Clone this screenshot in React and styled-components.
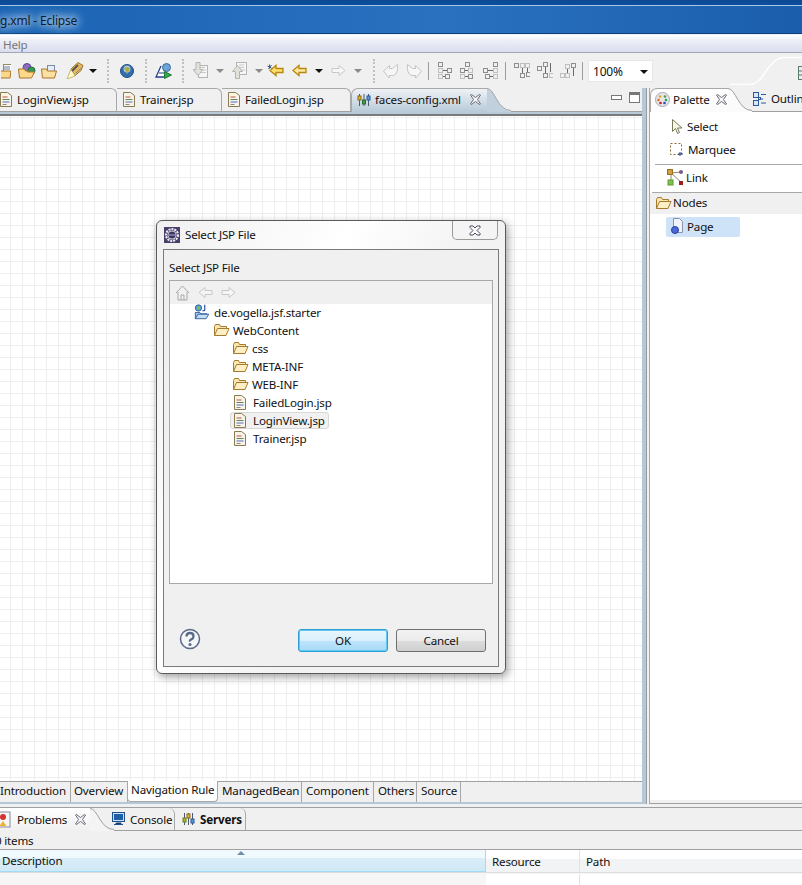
import React from "react";
import styled, { createGlobalStyle } from "styled-components";

const Global = createGlobalStyle`
  html, body { margin: 0; padding: 0; background: #f0f0f0; }
  body { font-family: "Noto Sans", "Open Sans", "Liberation Sans", sans-serif; font-size: 11.6px; letter-spacing: -0.18px; color: #111; }
  * { box-sizing: border-box; }
`;

const Win = styled.div`position: relative; width: 802px; height: 885px; overflow: hidden; display: flex; flex-direction: column; background: #f0f0f0;`;
const TitleBar = styled.div`
  flex: 0 0 35px; display: flex; align-items: center; padding: 7px 0 0 0;
  border-bottom: 1px solid #e8eefc;
  background:
    linear-gradient(180deg, #0c4a94 0, #0c4f9e 5px, #a9c6e6 5px, #a9c6e6 6px, transparent 6px, transparent 33px, #0f3f7c 33px),
    linear-gradient(90deg, #1b62b4 0, #2a72c0 55%, #1a5eac 100%);
`;
const TitleText = styled.span`
  font-size: 12px; color: #0d1a2a;
  text-shadow: 0 0 6px #cfe0f2, 0 0 10px #bcd4ee, 0 0 14px #a8c8ea, 0 0 16px #a8c8ea;
`;
const MenuBar = styled.div`
  flex: 0 0 18px; padding: 2px 0 0 3px; display: flex; align-items: center; color: #777;
  background: linear-gradient(180deg, #fff 0, #eceef6 35%, #d9ddee 100%); border-bottom: 1px solid #a4a8b4;
`;
const ToolBar = styled.div`flex: 0 0 35px; display: flex; align-items: center; position: relative; background: #f0f0f0;`;
const Slot = styled.div`flex: 0 0 ${p => p.$w}px; display: flex; justify-content: center; align-items: center; height: 24px;`;
const DotSep = styled.div`height: 24px; width: 2px; border-left: 2px dotted #c0c0c0;`;
const LineSep = styled.div`height: 18px; width: 1px; background: #9c9c9c;`;
const Arrow = styled.div`
  width: 0; height: 0; border-left: 4px solid transparent; border-right: 4px solid transparent;
  border-top: 4px solid ${p => p.$on ? "#111" : "#8a8a8a"};
`;
const Combo = styled.div`
  flex: 0 0 65px; height: 22px; background: #fff; border: 1px solid #e6e6e6; margin-left: 5px;
  display: flex; align-items: center; justify-content: space-between; padding: 2px 4px 0 4px; font-size: 12px;
`;
const PerspCurve = styled.svg`position: absolute; left: 730px; top: 2px; display: block;`;
const Work = styled.div`flex: 0 0 716px; display: flex; background: #f0f0f0;`;
const EditorFolder = styled.div`flex: 0 0 646px; display: flex; flex-direction: column; border-right: 4px solid #b4c8d8; box-shadow: 1px 0 0 #9a9a9a;`;
const TabStrip = styled.div`
  flex: 0 0 24px; display: flex; position: relative; align-items: stretch;
  border-bottom: 1px solid #a0a0a0;
`;
const Tab = styled.div`
  flex: 0 0 ${p => p.$w}px; display: flex; align-items: center; gap: 5px; padding: 0 0 ${p => p.$pb ?? 2}px ${p => p.$pl ?? 6}px;
  border-top: ${p => p.$noTop ? 0 : "1px solid #a8a8a8"}; border-right: 1px solid #a8a8a8; white-space: nowrap;
  border-top-right-radius: 6px; ${p => p.$bold && "font-weight: 700;"}
  margin-left: ${p => p.$ml || 0}px; color: #111;
`;
const ActiveTab = styled.div`
  flex: 0 0 ${p => p.$w}px; display: flex; align-items: center; gap: ${p => p.$gap ?? 5}px; padding: 0 0 2px ${p => p.$pl ?? 5}px;
  border-top: 1px solid #a8a8a8; border-left: 1px solid #a8a8a8; border-top-left-radius: 7px; margin-bottom: -1px;
  background: linear-gradient(180deg, ${p => p.$c1} 0, ${p => p.$c2} 100%); white-space: nowrap; position: relative;
`;
const Curve = styled.svg`flex: 0 0 ${p => p.width}px; margin-bottom: -1px; display: block; position: relative;`;
const CloseMark = styled.span`display: flex; margin-left: ${p => p.$m ?? 3}px;`;
const ViewControls = styled.div`margin-left: auto; display: flex; gap: 7px; align-items: center; padding: 0 2px 4px 0;`;
const MinBtn = styled.div`width: 11px; height: 5px; border: 1px solid #777; background: #fff;`;
const MaxBtn = styled.div`width: 11px; height: 11px; border: 1px solid #777; border-top-width: 3px; background: #fff;`;
const Band = styled.div`flex: 0 0 4px; background: #b8cad8; border-bottom: 2px solid #7a7a7a;`;
const Canvas = styled.div`
  flex: 1; background-color: #fff; min-height: 0; border-bottom: 1px solid #a0a0a0;
  background-image: linear-gradient(#eeeeee 1px, transparent 1px), linear-gradient(90deg, #eeeeee 1px, transparent 1px);
  background-size: 12px 12px; background-position: 10px 1px;
`;
const PageTabs = styled.div`flex: 0 0 22px; display: flex; background: #f0f0f0; border-bottom: 2px solid #b4c8d8; align-items: stretch;`;
const PageTab = styled.div`
  flex: 0 0 ${p => p.$w}px; display: flex; align-items: center; white-space: nowrap; padding: 0 0 3px ${p => p.$pl}px;
  border-right: 1px solid #a8a8a8; height: 20px;
  ${p => p.$on && "background: #fff; border-bottom: 1px solid #a8a8a8; border-bottom-right-radius: 4px; border-bottom-left-radius: 4px; border-left: 1px solid #a8a8a8; margin-top: -1px; height: 21px; margin-left: -1px; flex-basis: 91px;"}
`;
const Palette = styled.div`
  flex: 1; margin-left: 3px; display: flex; flex-direction: column; border-left: 1px solid #a8a8a8; border-bottom: 1px solid #a0a0a0;
`;
const PalBody = styled.div`flex: 1; background: #fff; display: flex; flex-direction: column; border-bottom: 3px solid #f0f0f0; padding-top: 3px;`;
const Tool = styled.div`
  height: ${p => p.$h || 23}px; display: flex; align-items: center; gap: ${p => p.$gap ?? 4}px; padding: 0 0 2px ${p => p.$pl || 22}px; white-space: nowrap;
`;
const Rule = styled.div`height: 1px; background: #a8a8a8; margin: ${p => p.$mt || 0}px 0 0 ${p => p.$ml || 0}px;`;
const Drawer = styled.div`height: 21px; background: #f0f0f0; display: flex; align-items: center; gap: 1px; padding: 0 0 2px 5px;`;
const Entry = styled.div`
  width: 74px; height: 20px; margin: 3px 0 0 16px; background: #cfe3f8; border-radius: 2px; display: flex; align-items: center; gap: 3px; padding: 0 0 2px 5px;
`;
const Bottom = styled.div`flex: 1; display: flex; flex-direction: column; border-top: 1px solid #a0a0a0; margin-top: 3px;`;
const BotTabs = styled.div`flex: 0 0 23px; display: flex; border-bottom: 1px solid #a0a0a0; align-items: stretch;`;
const BotActive = styled.div`
  flex: 0 0 90px; display: flex; align-items: center; gap: 6px; white-space: nowrap; margin-bottom: -1px;
  background: linear-gradient(180deg, #fff 0, #f0f0f0 100%);
`;
const Status = styled.div`flex: 0 0 19px; display: flex; align-items: center; border-bottom: 1px solid #a0a0a0;`;
const StatusText = styled.span`margin-left: -5px; white-space: pre;`;
const HeadRow = styled.div`flex: 0 0 23px; display: flex; background: linear-gradient(180deg, #fff 0, #fff 40%, #f1f3f5 40%, #f1f3f5 100%); border-bottom: 1px solid #dcdcdc;`;
const Col = styled.div`
  flex: 0 0 ${p => p.$w}px; display: flex; align-items: center; padding: 0 0 0 ${p => p.$pl || 6}px; position: relative; border-right: 1px solid ${p => p.$on ? "#9fdcf5" : "#e2e2e2"};
  ${p => p.$on && "background: linear-gradient(180deg, #f0f9fd 0, #f0f9fd 40%, #d9edf8 40%, #d0e8f5 100%); border-bottom: 1px solid #9fdcf5;"}
  ${p => p.$grow && "flex: 1; border-right: 0;"}
`;
const SortMark = styled.div`
  position: absolute; top: 1px; left: 237px; width: 0; height: 0; border-left: 4px solid transparent; border-right: 4px solid transparent; border-bottom: 4px solid #6e8eaa;
`;
const Rows = styled.div`flex: 1; display: flex; background: #f6f6f6; padding-top: 1px;`;
const Cell = styled.div`flex: 0 0 ${p => p.$w}px; border-right: 1px solid #e2e2e2; background: #fff; ${p => p.$grow && "flex: 1; border-right: 0;"} ${p => p.$off && "background: #f6f6f6; border: 0;"}`;

/* dialog */
const Dialog = styled.div`
  position: absolute; left: 156px; top: 220px; width: 350px; height: 454px; border: 1px solid #5a5a5a; border-radius: 6px;
  background: linear-gradient(115deg, #f0f0f0 0, #fff 35%, #f2f2f2 60%, #f2f2f2 100%);
  box-shadow: 2px 3px 8px rgba(0,0,0,.38); padding: 0 6px 6px 6px; display: flex; flex-direction: column;
`;
const DlgTitle = styled.div`flex: 0 0 28px; display: flex; align-items: flex-start; padding-left: 1px;`;
const DlgHeading = styled.div`display: flex; align-items: center; gap: 5px; height: 27px;`;
const CloseBtn = styled.div`
  margin-left: auto; margin-right: 1px; width: 46px; height: 19px; border: 1px solid #9a9a9a; border-top: 0; border-radius: 0 0 5px 5px; background: #f4f4f4;
  display: flex; align-items: center; justify-content: center;
`;
const DlgInner = styled.div`flex: 1; border: 1px solid #7a7a7a; background: #f0f0f0; padding: 8px 5px 0 5px; display: flex; flex-direction: column;`;
const DlgLabel = styled.div`height: 22px; display: flex; align-items: center; padding-bottom: 4px;`;
const TreeBox = styled.div`flex: 0 0 304px; border: 1px solid #a8a8a8; background: #fff; display: flex; flex-direction: column;`;
const TreeTools = styled.div`flex: 0 0 23px; background: #f0f0f0; display: flex; align-items: center; gap: 8px; padding-left: 5px;`;
const TreeList = styled.div`display: flex; flex-direction: column; margin-top: -1px;`;
const Node = styled.div`height: 18px; display: flex; align-items: center; padding-left: ${p => p.$d}px;`;
const NodeBody = styled.span`
  display: inline-flex; align-items: center; height: 17px; gap: ${p => p.$gap}px; white-space: nowrap;
  border: 1px solid transparent; padding: 0 3px 0 3px; border-radius: 3px;
  ${p => p.$sel && "background: #f1f1f1; border-color: #d8d8d8;"}
`;
const DlgFoot = styled.div`flex: 1; display: flex; align-items: flex-end; padding: 0 7px 14px 10px; gap: 8px;`;
const HelpIcon = styled.svg`margin-right: auto; margin-bottom: 2px;`;
const Btn = styled.div`
  width: 90px; height: 23px; border-radius: 3px; display: flex; align-items: center; justify-content: center;
  border: 1px solid ${p => p.$def ? "#2c9ed8" : "#707070"};
  background: ${p => p.$def ? "linear-gradient(180deg,#eaf6fd 0,#d9f0fc 50%,#bee6fd 50%,#a7d9f5 100%)" : "linear-gradient(180deg,#f2f2f2 0,#ebebeb 50%,#dddddd 50%,#cfcfcf 100%)"};
  ${p => p.$def && "box-shadow: inset 0 0 0 1px #62c8f0;"}
`;

/* icons */
const Doc = () => (
  <svg width="12" height="15" viewBox="0 0 12 15" style={{ flex: "0 0 12px" }}>
    <path d="M.5.5h7l4 3v11h-11z" fill="#f8f4e8" stroke="#8a7a50" />
    <path d="M2.500 5h5" stroke="#c05050" /><path d="M2.500 7.500h7" stroke="#5a8a5a" /><path d="M2.500 10h7" stroke="#5a6ac0" /><path d="M2.500 12.500h4" stroke="#8a8a8a" />
  </svg>
);
const FolderOpen = ({ w = 17 }) => (
  <svg width={w} height="14" viewBox="0 0 17 14" style={{ flex: `0 0 ${w}px` }}>
    <path d="M1.500 12.500v-9l1-2h4l1 2h6v2" fill="#fbe6ae" stroke="#a57a2c" />
    <path d="M1.500 12.500l3-7h11.500l-3 7z" fill="#fdeec4" stroke="#a57a2c" />
  </svg>
);
const Project = () => (
  <svg width="17" height="18" viewBox="0 0 19 18" style={{ flex: "0 0 17px" }}>
    <circle cx="5" cy="4.500" r="3.500" fill="#5aa6dc" stroke="#2a5a9a" /><path d="M3 4l3-2 1 3-2 2z" fill="#7ac05a" />
    <path d="M12 1v5.500q0 1.500-2.500 1" fill="none" stroke="#2a4aa0" strokeWidth="1.300" />
    <path d="M1.500 16.500v-7h5l1 1.500h7v2" fill="#9ec4ec" stroke="#2a5a9a" /><path d="M1.500 16.500l3-5h12l-3 5z" fill="#c4dcf6" stroke="#2a5a9a" />
  </svg>
);
const XIcon = ({ c = "#6a6a7a" }) => (
  <svg width="11" height="11" viewBox="0 0 11 11">
    <path d="M.5 1l1-.5 4 3 4-3 1 .5-3 4.500 3 4.500-1 .5-4-3-4 3-1-.5 3-4.500z" fill="#f6f6f6" stroke={c} />
  </svg>
);
const DlgX = () => (
  <svg width="12" height="11" viewBox="0 0 12 11">
    <path d="M1 1h3l2 2 2-2h3v1.500l-3 3 3 3v1.500h-3l-2-2-2 2h-3v-1.500l3-3-3-3z" fill="#fff" stroke="#4a4a62" />
  </svg>
);
const Ic = ({ children, w = 16, h = 16 }) => <svg width={w} height={h} viewBox={`0 0 ${w} ${h}`}>{children}</svg>;
const ArrowL = ({ on, w = 15 }) => (
  <Ic w={w} h={13}><path d="M1 6.500l6-5v3h7v4h-7v3z" fill={on ? "#ffe8a0" : "#f4f4f4"} stroke={on ? "#b8860b" : "#c8c8c8"} strokeWidth={on ? 1.300 : 1} /></Ic>
);
const ArrowR = () => (
  <Ic w={15} h={13}><path d="M14 6.500l-6-5v3h-7v4h7v3z" fill="#f6f6f6" stroke="#c8c8c8" /></Ic>
);
const B = ({ x, y, d }) => <rect x={x + .5} y={y + .5} width="4" height="4" strokeDasharray={d ? "1 1" : undefined} />;
const L = ({ d }) => <path d={d} stroke="#6a6a6a" />;
const Align = ({ kind }) => (
  <Ic w={16} h={17}>
    <g fill="none" stroke="#8e8e8e">
      {kind === 0 && <><B x={1} y={0} /><B x={1} y={6} d /><B x={10} y={6} /><B x={1} y={12} d /><B x={8} y={12} /><L d="M6 8.500h4M6 14.500h2" /></>}
      {kind === 1 && <><B x={6} y={0} /><B x={1} y={6} /><B x={9} y={6} d /><B x={1} y={12} d /><B x={9} y={12} /><L d="M6 8.500h3M6 14.500h3" /></>}
      {kind === 2 && <><B x={11} y={0} /><B x={1} y={6} /><B x={11} y={6} d /><B x={3} y={12} /><B x={11} y={12} d /><L d="M6 8.500h5M8 14.500h3" /></>}
      {kind === 3 && <><B x={0} y={1} /><B x={11} y={1} d /><B x={6} y={1} d /><B x={6} y={11} /><B x={12} y={10} /><L d="M8.500 6v5M13.500 6v4" /></>}
      {kind === 4 && <><B x={0} y={4} /><B x={6} y={0} /><B x={6} y={11} /><B x={12} y={11} d /><L d="M8.500 5v6M13.500 1v9" /></>}
      {kind === 5 && <><B x={5} y={2} d /><B x={11} y={1} /><B x={0} y={11} d /><B x={5} y={11} d /><L d="M7.500 7v4M13.500 6v8" /></>}
    </g>
  </Ic>
);
const Tools = {
  folder1: <Ic w={10} h={16}><rect x="2.500" y="1.500" width="8" height="8" fill="#fff" stroke="#9a8a5a" /><path d="M3 4h6M3 6h6" stroke="#6a7a9a" /><path d="M-5 15l3-7h12l-1 7z" fill="#fbd88a" stroke="#a8742a" /></Ic>,
  folder2: <Ic w={18} h={16}><circle cx="9" cy="4.500" r="4" fill="#8a6ac4" stroke="#5a4a8a" /><circle cx="13.500" cy="7.500" r="3.500" fill="#2f9a5a" stroke="#2a6a3a" /><path d="M1.500 15l-1-9h6l1 2h3l-1 1h7l-3 6z" fill="#fbd88a" stroke="#a8742a" /></Ic>,
  folder3: <Ic w={16} h={16}><rect x="6.500" y="2.500" width="7" height="6" fill="#e4ecf6" stroke="#7a8aa8" /><path d="M1.500 15l-1-9h5l1 2h9l-2 7z" fill="#fbe0a0" stroke="#a8742a" /></Ic>,
  pen: <Ic w={18} h={17}><path d="M5 7l7-6.500 5 3-2 5-6 5z" fill="#e8b860" stroke="#9a7428" /><path d="M9 14l-8 3 4-10z" fill="#fffac8" stroke="#c8ba78" /><path d="M6 9l6-6" stroke="#555" strokeWidth="2" /><path d="M10 11l5-5" stroke="#8a8a8a" /></Ic>,
  globe: <Ic w={14} h={14}><circle cx="7" cy="7" r="6.500" fill="#2f6fb0" stroke="#274c7e" /><circle cx="7" cy="5" r="3.500" fill="#a8c8e8" /><path d="M4 4l3-1 3 1-2 5-1 1-1-3z" fill="#b0a840" /></Ic>,
  run: <Ic w={17} h={16}><circle cx="11.500" cy="4.500" r="4" fill="#6aa4d8" stroke="#3a6a9a" /><path d="M6 3L1 14h9" fill="#fff" stroke="#24408a" strokeWidth="1.300" /><path d="M4 10h5" stroke="#24408a" /><path d="M9.500 8.500l7 3.500-7 3.500z" fill="#35a84a" stroke="#1f7a33" /></Ic>,
  imp: <Ic w={15} h={17}><rect x="5.500" y="3.500" width="9" height="12" fill="#f6f6f6" stroke="#b4b4b4" /><path d="M7 5.500h5M8 8h5M8 10.500h5" stroke="#c8c8c8" /><path d="M3 .5h4v7h3l-5 6-5-6h3z" fill="#e2e2da" stroke="#b4b4b4" /></Ic>,
  exp: <Ic w={15} h={17}><rect x="4.500" y=".5" width="10" height="12" fill="#f6f6f6" stroke="#b4b4b4" /><path d="M7 3h5M7 5.500h5M8 8h5" stroke="#c8c8c8" /><path d="M3.500 16.500v-7h-3l5-6 5 6h-3v7z" fill="#e2e2da" stroke="#b4b4b4" /></Ic>,
  star: <Ic w={17} h={13}><path d="M3 6.500l6-5v3h7v4h-7v3z" fill="#ffe070" stroke="#b8860b" strokeWidth="1.300" /><path d="M.5 2l4 2M4.500 1l-3 4M2.500.5v4" stroke="#345a8a" /></Ic>,
  undo: <Ic w={16} h={15}><path d="M.5 8l6-5.500v3h3l5-4q1 9-4 11h-4v3z" fill="#f6f6f6" stroke="#c4c4c4" /></Ic>,
  redo: <Ic w={16} h={15}><path d="M15.500 8l-6-5.500v3h-3l-5-4q-1 9 4 11h4v3z" fill="#f6f6f6" stroke="#c4c4c4" /></Ic>,
};

const Gear = () => (
  <Ic w={16} h={16}>
    <rect width="16" height="16" fill="#4a3f6a" />
    <circle cx="8" cy="8" r="6" fill="none" stroke="#f0f0f4" strokeWidth="2" strokeDasharray="2 1" />
    <circle cx="8" cy="8" r="4.500" fill="#d8d8e4" /><circle cx="8" cy="8" r="3.500" fill="#3a3560" /><path d="M4.500 8h7" stroke="#8a84b4" strokeWidth="1.500" />
  </Ic>
);

const treeRows = [
  [20, 3, <Project />, "de.vogella.jsf.starter"],
  [39, 3, <FolderOpen />, "WebContent"],
  [58, 3, <FolderOpen />, "css"],
  [58, 3, <FolderOpen />, "META-INF"],
  [58, 3, <FolderOpen />, "WEB-INF"],
  [60, 7, <Doc />, "FailedLogin.jsp"],
  [60, 7, <Doc />, "LoginView.jsp", true],
  [60, 7, <Doc />, "Trainer.jsp"],
];

const pageTabs = [["Introduction", 71, 0], ["Overview", 57, 3], ["Navigation Rule", 90, 3, true], ["ManagedBean", 84, 4], ["Component", 72, 4], ["Others", 43, 4], ["Source", 44, 4]];

const toolbar = [
  [11, Tools.folder1], [7], [18, Tools.folder2], [5], [16, Tools.folder3], [8], [19, Tools.pen], [4], [10, <Arrow $on />], [9], "dot",
  [36, Tools.globe], "dot",
  [8], [17, Tools.run], [10], "dot",
  [8], [17, Tools.imp], [6], [9, <Arrow />], [7], [17, Tools.exp], [6], [9, <Arrow />], [4], [17, Tools.star], [8], [15, <ArrowL on />], [8], [8, <Arrow $on />], [8], [15, <ArrowR />], [8], [8, <Arrow />], [11], "dot",
  [8], [16, Tools.undo], [7], [16, Tools.redo], [6], "line",
  [8], [16, <Align kind={0} />], [6], [16, <Align kind={1} />], [7], [16, <Align kind={2} />], [7], "line",
  [8], [16, <Align kind={3} />], [7], [16, <Align kind={4} />], [7], [16, <Align kind={5} />], [6], "line",
];

export default function App() {
  return (
    <Win>
      <Global />
      <TitleBar><TitleText>g.xml - Eclipse</TitleText></TitleBar>
      <MenuBar>Help</MenuBar>
      <ToolBar>
        {toolbar.map((it, i) =>
          it === "dot" ? <DotSep key={i} /> :
          it === "line" ? <LineSep key={i} /> :
          <Slot key={i} $w={it[0]}>{it[1]}</Slot>
        )}
        <Combo>100%<Arrow $on /></Combo>
        <PerspCurve width="72" height="30" viewBox="0 0 72 30">
          <path d="M0 29.500h20c14 0 18-27 34-27h18" fill="none" stroke="#fff" strokeWidth="1.500" />
          <rect x="68.500" y="11.500" width="10" height="13" fill="#e8eef0" stroke="#5a7a6a" />
          <path d="M68 16h6M68 20h6" stroke="#5a7a6a" />
        </PerspCurve>
      </ToolBar>
      <Work>
        <EditorFolder>
          <TabStrip>
            <Tab $w={117} $pl={0}><Doc />LoginView.jsp</Tab>
            <Tab $w={105}><Doc />Trainer.jsp</Tab>
            <Tab $w={129}><Doc />FailedLogin.jsp</Tab>
            <ActiveTab $w={136} $c1="#eef2f6" $c2="#b8cad8" $gap={4}>
              <svg width="14" height="14" viewBox="0 0 14 14"><g fill="none" stroke="#4a5a72"><path d="M2.500 1v12M7 1v12M11.500 1v12" /></g><rect x="1" y="3" width="3" height="4" fill="#e8b030" stroke="#8a6a1a" /><rect x="5.500" y="7" width="3" height="4" fill="#4aa04a" stroke="#2a6a2a" /><rect x="10" y="3" width="3" height="4" fill="#5a9ad8" stroke="#2a5a9a" /></svg>
              faces-config.xml <CloseMark $m={5}><XIcon /></CloseMark>
            </ActiveTab>
            <Curve width="24" height="24" viewBox="0 0 24 24"><path d="M0 1c8 0 10 22 24 22v1H0z" fill="#c0d0dc" /><path d="M0 .5c8 0 10 22 24 22" fill="none" stroke="#a0a0a0" /></Curve>
            <ViewControls><MinBtn /><MaxBtn /></ViewControls>
          </TabStrip>
          <Band />
          <Canvas />
          <PageTabs>
            {pageTabs.map(([t, w, pl, on]) => <PageTab key={t} $w={w} $pl={pl} $on={on}>{t}</PageTab>)}
          </PageTabs>
        </EditorFolder>
        <Palette>
          <TabStrip>
            <ActiveTab $w={78} $c1="#fff" $c2="#fbfbfb" $pl={4} $gap={3}>
              <svg width="15" height="15" viewBox="0 0 15 15"><circle cx="7.500" cy="7.500" r="7" fill="#e6e6ea" stroke="#a8a8b4" /><circle cx="5" cy="4.500" r="1.300" fill="#e8a020" /><circle cx="10" cy="4.500" r="1.300" fill="#48a048" /><circle cx="3.500" cy="8" r="1.300" fill="#e87020" /><circle cx="11" cy="8" r="1.300" fill="#30a048" /><circle cx="5.500" cy="11" r="1.300" fill="#c82020" /><circle cx="9.500" cy="11" r="1.300" fill="#2050c0" /></svg>
              Palette <CloseMark><XIcon /></CloseMark>
            </ActiveTab>
            <Curve width="24" height="24" viewBox="0 0 24 24"><path d="M0 1c8 0 10 22 24 22v1H0z" fill="#fbfbfb" /><path d="M0 .5c8 0 10 22 24 22" fill="none" stroke="#a0a0a0" /></Curve>
            <Tool $pl={1} $gap={5}>
              <svg width="13" height="14" viewBox="0 0 13 14" style={{ flex: "0 0 13px" }}><g fill="none" stroke="#2a5a9a"><rect x=".5" y=".5" width="5" height="5" fill="#dbe8f8" /><rect x=".5" y="8.500" width="5" height="5" fill="#dbe8f8" /><path d="M8 2.500h5M8 7h2M8 11h5" /><rect x="5.500" y="5.500" width="2" height="2" /></g></svg>
              Outline
            </Tool>
          </TabStrip>
          <PalBody>
            <Tool $h={24}>
              <svg width="11" height="15" viewBox="0 0 11 15"><path d="M.5.5v12l3-3 2 5 2-1-2-4.500h4.500z" fill="#f6f6ea" stroke="#7a7a5a" /></svg>
              Select
            </Tool>
            <Tool $h={23} $pl={20}>
              <svg width="14" height="13" viewBox="0 0 14 13" style={{ flex: "0 0 14px" }}><rect x=".5" y=".5" width="11" height="11" fill="none" stroke="#8a6a2a" strokeDasharray="2 2" /><path d="M10 9v4M8 11h5" stroke="#1a3a8a" /></svg>
              Marquee
            </Tool>
            <Rule $mt={2} $ml={5} />
            <Tool $h={27} $pl={17} $gap={2}>
              <svg width="17" height="17" viewBox="0 0 17 17"><path d="M4 4l11 10M4 4l10-1M4 4v9" stroke="#8a8a70" /><rect x=".5" y=".5" width="5" height="5" fill="#d0a040" stroke="#9a7020" /><circle cx="14" cy="3" r="2" fill="#7a5a8a" /><rect x="1" y="11" width="5" height="5" fill="#80c050" stroke="#5a9a30" /><rect x="12" y="12" width="4" height="4" fill="#a02020" /></svg>
              Link
            </Tool>
            <Rule $ml={2} />
            <Drawer><FolderOpen />Nodes</Drawer>
            <Entry>
              <svg width="13" height="16" viewBox="0 0 13 16"><path d="M2.500.5h6l3 3v11h-9z" fill="#f0f4fa" stroke="#8a94a8" /><circle cx="4" cy="12" r="3.500" fill="#4a6ad8" stroke="#2a3a9a" /></svg>
              Page
            </Entry>
          </PalBody>
        </Palette>
      </Work>
      <Bottom>
        <BotTabs>
          <BotActive>
            <svg width="11" height="17" viewBox="0 0 11 17" style={{ flex: "0 0 11px" }}><rect x="-4" y="1" width="14" height="15" fill="#f6f6f6" stroke="#8a8aa0" /><circle cx="3" cy="6" r="3" fill="#d83030" /><path d="M3 10l3.500 5h-7z" fill="#f0b030" /></svg>
            Problems <CloseMark $m={2}><XIcon /></CloseMark>
          </BotActive>
          <Curve width="24" height="23" viewBox="0 0 24 23"><path d="M0 1c8 0 10 21 24 21v1H0z" fill="#f4f4f4" /><path d="M0 .5c8 0 10 21 24 21" fill="none" stroke="#a0a0a0" /></Curve>
          <Tab $w={63} $pl={0} $pb={0} $noTop $ml={-2}>
            <svg width="13" height="14" viewBox="0 0 13 14" style={{ flex: "0 0 13px" }}><rect x=".5" y=".5" width="12" height="9" fill="#cfe0f4" stroke="#1e4f8a" /><rect x="2" y="2" width="9" height="6" fill="#1e5ea8" /><path d="M4 11h5v1H4zM2 12.500h9" stroke="#1e4f8a" /></svg>
            Console
          </Tab>
          <Tab $w={71} $pl={7} $pb={0} $bold $noTop>
            <svg width="13" height="14" viewBox="0 0 13 14" style={{ flex: "0 0 13px" }}><g stroke="#4a5a72" fill="none"><path d="M2.500 1v12M6.500 1v12M10.500 1v12" /></g><rect x="1" y="6" width="3" height="4" fill="#a8c030" stroke="#6a7a1a" /><rect x="5" y="2" width="3" height="4" fill="#e8b030" stroke="#8a6a1a" /><rect x="9" y="7" width="3" height="4" fill="#5a9ad8" stroke="#2a5a9a" /></svg>
            Servers
          </Tab>
        </BotTabs>
        <Status><StatusText>0 items</StatusText></Status>
        <HeadRow>
          <Col $w={486} $on $pl={2}>Description<SortMark /></Col>
          <Col $w={94}>Resource</Col>
          <Col $grow>Path</Col>
        </HeadRow>
        <Rows>
          <Cell $w={486} $off />
          <Cell $w={94} />
          <Cell $grow />
        </Rows>
      </Bottom>
      <Dialog>
        <DlgTitle>
          <DlgHeading><Gear />Select JSP File</DlgHeading>
          <CloseBtn><DlgX /></CloseBtn>
        </DlgTitle>
        <DlgInner>
          <DlgLabel>Select JSP File</DlgLabel>
          <TreeBox>
            <TreeTools>
              <Ic w={15} h={16}><path d="M1 8l6.500-7 6.500 7M3 7v8h9V7M6 15v-5h3v5" fill="#f2f2f2" stroke="#a8a8a8" /></Ic>
              <ArrowL />
              <ArrowR />
            </TreeTools>
            <TreeList>
              {treeRows.map(([d, gap, icon, label, sel]) => (
                <Node key={label} $d={d}><NodeBody $gap={gap} $sel={sel}>{icon}{label}</NodeBody></Node>
              ))}
            </TreeList>
          </TreeBox>
          <DlgFoot>
            <HelpIcon width="22" height="22" viewBox="0 0 22 22">
              <circle cx="11" cy="11" r="9.500" fill="#f4f6f8" stroke="#5a6a8a" strokeWidth="1.500" />
              <path d="M7.500 8.500q0-3.500 3.500-3.500t3.500 3.200q0 2-2 3t-1.500 2.300" fill="none" stroke="#5a6a8a" strokeWidth="2.300" />
              <circle cx="11" cy="16.500" r="1.500" fill="#5a6a8a" />
            </HelpIcon>
            <Btn $def>OK</Btn>
            <Btn>Cancel</Btn>
          </DlgFoot>
        </DlgInner>
      </Dialog>
    </Win>
  );
}
